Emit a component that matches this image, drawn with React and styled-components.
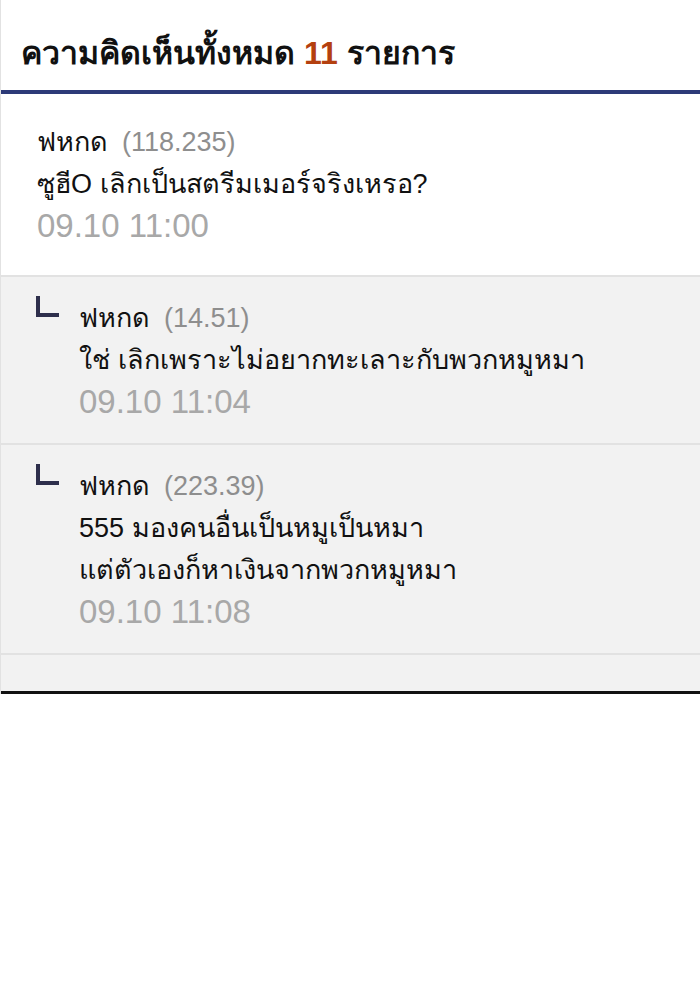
import React from 'react'
import styled, { createGlobalStyle } from 'styled-components'

const GlobalStyle = createGlobalStyle`
  body {
    margin: 0;
    background: #fff;
    font-family: "Liberation Sans", Arial, sans-serif;
  }
`;

const Page = styled.div`
  width: 700px;
  border-left: 1px solid #e2e2e2;
  box-sizing: border-box;
`;

const Header = styled.div`
  height: 94px;
  display: flex;
  align-items: center;
  padding: 14px 0 0 20px;
  box-sizing: border-box;
  border-bottom: 4px solid #2d3a78;
`;

const Title = styled.h2`
  margin: 0;
  font-size: 32px;
  font-weight: 700;
  color: #111;
  span {
    color: #b4400f;
  }
`;

const List = styled.div`
  border-bottom: 3px solid #111;
  background: #f2f2f2;
`;

const Item = styled.div`
  display: flex;
  background: ${p => (p.reply ? '#f2f2f2' : '#fff')};
  padding: ${p => (p.reply ? '20px 0 20px 35px' : '27px 0 28px 36px')};
  border-bottom: 2px solid #e2e2e2;
`;

const ReplyMark = styled.div`
  width: 23px;
  height: 21px;
  margin-top: -1px;
  margin-right: 20px;
  flex-shrink: 0;
  border-left: 4px solid #2e2f4c;
  border-bottom: 4px solid #2e2f4c;
  box-sizing: border-box;
`;

const Body = styled.div`
  font-size: 27px;
  line-height: 42px;
  color: #111;
`;

const Name = styled.div`
  color: #111;
`;

const Ip = styled.span`
  color: #8e8e8e;
  margin-left: 14px;
`;

const Text = styled.div``;

const Time = styled.div`
  font-size: 33px;
  color: #a8a8a8;
`;

const Spacer = styled.div`
  height: 36px;
`;

const comments = [
  { name: 'ฟหกด', ip: '118.235', lines: ['ซูฮีO เลิกเป็นสตรีมเมอร์จริงเหรอ?'], time: '09.10 11:00' },
  { name: 'ฟหกด', ip: '14.51', lines: ['ใช่ เลิกเพราะไม่อยากทะเลาะกับพวกหมูหมา'], time: '09.10 11:04', reply: true },
  { name: 'ฟหกด', ip: '223.39', lines: ['555 มองคนอื่นเป็นหมูเป็นหมา', 'แต่ตัวเองก็หาเงินจากพวกหมูหมา'], time: '09.10 11:08', reply: true },
];

export default function App() {
  return (
    <Page>
      <GlobalStyle />
      <Header>
        <Title>ความคิดเห็นทั้งหมด <span>11</span> รายการ</Title>
      </Header>
      <List>
        {comments.map((c, i) => (
          <Item key={i} reply={c.reply}>
            {c.reply && <ReplyMark />}
            <Body>
              <Name>{c.name}<Ip>({c.ip})</Ip></Name>
              {c.lines.map((l, j) => <Text key={j}>{l}</Text>)}
              <Time>{c.time}</Time>
            </Body>
          </Item>
        ))}
        <Spacer />
      </List>
    </Page>
  )
}
